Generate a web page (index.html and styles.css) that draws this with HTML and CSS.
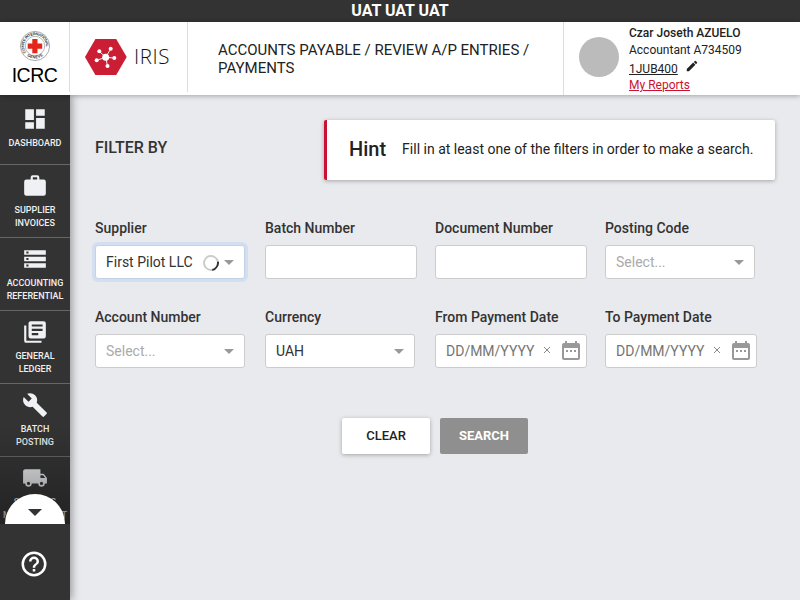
FILE: index.html
```html
<!DOCTYPE html>
<html lang="en">
<head>
<meta charset="utf-8">
<title>IRIS - Payments</title>
<link rel="stylesheet" href="styles.css">
</head>
<body>
<div class="env">UAT UAT UAT</div>
<header class="header">
  <div class="org">
    <svg class="seal" width="32" height="32" viewBox="0 0 32 32">
      <defs>
        <path id="ring" d="M7 22.4A11 11 0 1 1 25 22.4"/>
        <path id="ringlow" d="M6.2 24.2A13.6 13.6 0 0 0 25.8 24.2"/>
      </defs>
      <circle cx="16" cy="16" r="14.6" fill="#fff" stroke="#888" stroke-width=".7"/>
      <circle cx="16" cy="16" r="9.7" fill="#fff" stroke="#999" stroke-width=".7"/>
      <text class="sealtext"><textPath href="#ring" textLength="42">COMITE INTERNATIONAL</textPath></text>
      <text class="sealtext"><textPath href="#ringlow" startOffset="2.5" textLength="17">GENEVE</textPath></text>
      <path d="M13.3 9h5.2v4.6h4.7v5.1h-4.7v4.6h-5.2v-4.6H8.7v-5.1h4.6z" fill="#e3251b"/>
    </svg>
    <div class="orgname">ICRC</div>
  </div>
  <div class="app">
    <svg width="42" height="36" viewBox="0 0 42 36">
      <path d="M10.4 0h20.8L41.7 18 31.2 36H10.4L0 18z" fill="#cb1e35"/>
      <path d="M20.7 18.3 14.3 12.3M20.7 18.3 25.7 9.8M20.7 18.3 29.3 19M20.7 18.3 22.5 27M20.7 18.3 11.7 21.3" stroke="#fff" stroke-width=".9"/>
      <g fill="#fff"><circle cx="20.7" cy="18.3" r="3.5"/><circle cx="14.3" cy="12.3" r="2"/><circle cx="25.7" cy="9.8" r="2"/><circle cx="29.3" cy="19" r="2"/><circle cx="22.5" cy="27" r="2"/><circle cx="11.7" cy="21.3" r="2"/></g>
    </svg>
    <span class="appname">IRIS</span>
  </div>
  <div class="crumbs">ACCOUNTS PAYABLE / REVIEW A/P ENTRIES / PAYMENTS</div>
  <div class="user">
    <div class="avatar"></div>
    <div class="info">
      <div class="name">Czar Joseth AZUELO</div>
      <div class="role">Accountant A734509</div>
      <div class="unit"><a>1JUB400</a><svg width="14" height="14" viewBox="0 0 24 24"><path fill="#222" d="M3 17.25V21h3.75L17.81 9.94l-3.75-3.75L3 17.25zM20.71 7.04a1 1 0 0 0 0-1.41l-2.34-2.34a1 1 0 0 0-1.41 0l-1.83 1.83 3.75 3.75 1.83-1.83z"/></svg></div>
      <div class="reports"><a>My Reports</a></div>
    </div>
  </div>
</header>
<div class="main">
  <nav class="side">
    <div class="items">
      <div class="item first"><svg viewBox="0 0 24 24"><path d="M3 13h8V3H3v10zm0 8h8v-6H3v6zm10 0h8V11h-8v10zm0-18v6h8V3h-8z"/></svg>DASHBOARD</div>
      <div class="item"><svg viewBox="0 0 24 24"><path d="M10 2h4a2 2 0 0 1 2 2v2h4a2 2 0 0 1 2 2v11a2 2 0 0 1-2 2H4a2 2 0 0 1-2-2V8a2 2 0 0 1 2-2h4V4a2 2 0 0 1 2-2zm4 4V4h-4v2h4z"/></svg>SUPPLIER<br>INVOICES</div>
      <div class="item"><svg viewBox="0 0 24 24"><path d="M2 20h20v-4H2v4zm2-3h2v2H4v-2zM2 4v4h20V4H2zm4 3H4V5h2v2zm-4 7h20v-4H2v4zm2-3h2v2H4v-2z"/></svg>ACCOUNTING<br>REFERENTIAL</div>
      <div class="item"><svg viewBox="0 0 24 24"><path d="M4 6H2v14a2 2 0 0 0 2 2h14v-2H4V6zm16-4H8a2 2 0 0 0-2 2v12a2 2 0 0 0 2 2h12a2 2 0 0 0 2-2V4a2 2 0 0 0-2-2zm-1 9H9V9h10v2zm-4 4H9v-2h6v2zm4-8H9V5h10v2z"/></svg>GENERAL<br>LEDGER</div>
      <div class="item"><svg viewBox="0 0 24 24"><path d="M22.7 19l-9.1-9.1c.9-2.3.4-5-1.5-6.9-2-2-5-2.4-7.4-1.3L9 6 6 9 1.6 4.7C.4 7.1.9 10.1 2.9 12.1c1.9 1.9 4.6 2.4 6.9 1.5l9.1 9.1c.4.4 1 .4 1.4 0l2.3-2.3c.5-.4.5-1.1.1-1.4z"/></svg>BATCH<br>POSTING</div>
      <div class="item last"><svg viewBox="0 0 24 24"><path d="M20 8h-3V4H3c-1.1 0-2 .9-2 2v11h2a3 3 0 0 0 6 0h6a3 3 0 0 0 6 0h2v-5l-3-4zM6 18.5a1.5 1.5 0 1 1 0-3 1.5 1.5 0 0 1 0 3zm13.5-9l1.96 2.5H17V9.5h2.5zm-1.5 9a1.5 1.5 0 1 1 0-3 1.5 1.5 0 0 1 0 3z"/></svg>SERVICES<br>MANAGEMENT</div>
      <div class="fade"></div>
      <div class="more"><svg width="14" height="7" viewBox="0 0 14 7"><path d="M0 0h14L7 7z" fill="#333"/></svg></div>
    </div>
    <div class="help"><svg width="30" height="30" viewBox="0 0 24 24"><path fill="#fff" d="M11 18h2v-2h-2v2zm1-16a10 10 0 1 0 0 20 10 10 0 0 0 0-20zm0 18a8 8 0 1 1 0-16 8 8 0 0 1 0 16zm0-14a4 4 0 0 0-4 4h2a2 2 0 1 1 4 0c0 2-3 1.75-3 5h2c0-2.25 3-2.5 3-5a4 4 0 0 0-4-4z"/></svg></div>
  </nav>
  <main class="content">
    <div class="top">
      <h1>FILTER BY</h1>
      <div class="hint"><b>Hint</b><span>Fill in at least one of the filters in order to make a search.</span></div>
    </div>
    <div class="grid">
      <div class="field"><label>Supplier</label><div class="box sel focus"><span>First Pilot LLC</span><i class="spin"></i><i class="arrow"></i></div></div>
      <div class="field"><label>Batch Number</label><div class="box"></div></div>
      <div class="field"><label>Document Number</label><div class="box"></div></div>
      <div class="field"><label>Posting Code</label><div class="box sel"><span class="ph">Select...</span><i class="arrow"></i></div></div>
      <div class="field"><label>Account Number</label><div class="box sel"><span class="ph">Select...</span><i class="arrow"></i></div></div>
      <div class="field"><label>Currency</label><div class="box sel"><span>UAH</span><i class="arrow"></i></div></div>
      <div class="field"><label>From Payment Date</label><div class="box"><span class="date">DD/MM/YYYY</span><svg class="x" width="8" height="8" viewBox="0 0 8 8"><path d="M1 1l6 6M7 1L1 7" stroke="#888"/></svg><svg class="cal" width="18" height="20" viewBox="0 0 18 20"><path fill="#999" fill-rule="evenodd" d="M3 0h2v2h8V0h2v2h1a2 2 0 0 1 2 2v13a2 2 0 0 1-2 2H2a2 2 0 0 1-2-2V4a2 2 0 0 1 2-2h1zM2 7v10h14V7zM4 9h2v2H4zm4 0h2v2H8zm4 0h2v2h-2z"/></svg></div></div>
      <div class="field"><label>To Payment Date</label><div class="box"><span class="date">DD/MM/YYYY</span><svg class="x" width="8" height="8" viewBox="0 0 8 8"><path d="M1 1l6 6M7 1L1 7" stroke="#888"/></svg><svg class="cal" width="18" height="20" viewBox="0 0 18 20"><path fill="#999" fill-rule="evenodd" d="M3 0h2v2h8V0h2v2h1a2 2 0 0 1 2 2v13a2 2 0 0 1-2 2H2a2 2 0 0 1-2-2V4a2 2 0 0 1 2-2h1zM2 7v10h14V7zM4 9h2v2H4zm4 0h2v2H8zm4 0h2v2h-2z"/></svg></div></div>
    </div>
    <div class="actions"><button class="clear">CLEAR</button><button class="search">SEARCH</button></div>
  </main>
</div>
</body>
</html>
```
FILE: styles.css
```css
* { box-sizing: border-box; }
body {
  margin: 0; width: 800px; height: 600px; overflow: hidden;
  display: flex; flex-direction: column;
  font-family: Roboto, "Liberation Sans", sans-serif; font-size: 14px; color: #333; background: #e9eaee;
}
.env { height: 22px; flex: none; background: #333; color: #fff; text-align: center; font-weight: 700; font-size: 16px; line-height: 21px; }
.header { height: 73px; flex: none; display: flex; background: #fff; box-shadow: 0 1px 5px rgba(0,0,0,.3); position: relative; z-index: 2; }
.org { width: 70px; height: 70px; border-right: 1px solid #ddd; display: flex; flex-direction: column; align-items: center; padding-top: 8px; }
.sealtext { font: 700 3.9px "Liberation Sans", sans-serif; fill: #333; }
.orgname { font: 19.5px/20px "Liberation Sans", Arial, sans-serif; color: #000; margin-top: 3px; letter-spacing: -.5px; }
.app { width: 118px; height: 70px; border-right: 1px solid #ddd; display: flex; align-items: center; padding-left: 15px; gap: 7px; }
.appname { font: 300 20.5px/26px "Open Sans", sans-serif; color: #111; margin-top: -3px; letter-spacing: .6px; }
.crumbs { width: 375px; padding: 19px 20px 0 30px; font-size: 15px; line-height: 18px; color: #222; }
.user { flex: 1; border-left: 1px solid #ddd; display: flex; padding-left: 15px; }
.avatar { width: 40px; height: 40px; border-radius: 50%; background: #bbb; margin: 15px 10px 0 0; }
.info { font-size: 12px; color: #222; padding-top: 3px; }
.info div { height: 17px; line-height: 17px; }
.info .name { font-weight: 500; }
.unit { display: flex; gap: 7px; }
.unit a, .reports a { text-decoration: underline; }
.info .unit { height: 18px; line-height: 21px; }
.info .reports { color: #cb1131; height: 16px; line-height: 16px; }
.main { flex: 1; display: flex; min-height: 0; }
.side { width: 70px; background: #333; display: flex; flex-direction: column; box-shadow: 2px 0 8px rgba(0,0,0,.35); }
.items { height: 429px; overflow: hidden; position: relative; }
.item { height: 73px; border-bottom: 1px solid #666; padding-top: 8px; color: #f0f0f0; text-align: center; font-size: 9px; line-height: 13px; font-weight: 500; }
.item.first { height: 70px; padding-top: 11px; }
.item svg { display: block; width: 26px; height: 26px; margin: 0 auto 5px; fill: #f0f1f4; }
.item.last { letter-spacing: .2px; }
.fade { position: absolute; left: 0; right: 0; bottom: 0; height: 100px; background: linear-gradient(rgba(20,20,20,0), rgba(20,20,20,.5)); }
.more { position: absolute; left: 5px; bottom: 0; width: 60px; height: 30px; border-radius: 30px 30px 0 0; background: #fff; display: flex; justify-content: center; padding-top: 15px; }
.help { height: 76px; padding: 25px 0 0 19px; }
.content { flex: 1; padding: 25px; }
.top { display: flex; justify-content: space-between; }
h1 { margin: 18px 0 0; font-size: 16px; line-height: 19px; font-weight: 500; }
.hint { width: 451px; height: 60px; background: #fff; border-left: 3px solid #cb1131; border-radius: 2px; box-shadow: 0 1px 4px rgba(0,0,0,.3); display: flex; align-items: center; padding: 0 0 2px 22px; gap: 16px; color: #222; }
.hint span { white-space: nowrap; }
.hint b { font-size: 20px; font-weight: 500; }
.grid { display: grid; grid-template-columns: repeat(4, 152px); column-gap: 18px; row-gap: 29px; margin-top: 39px; }
.field label { display: block; height: 26px; line-height: 18px; font-weight: 500; }
.box { width: 152px; height: 34px; background: #fff; border: 1px solid #ccc; border-radius: 3px; display: flex; align-items: center; padding: 0 6px 0 10px; }
.sel { width: 150px; padding-right: 10px; }
.focus { border-color: #c4d2e8; box-shadow: 0 0 0 3px #d3dff0; }
.ph { color: #aaa; }
.date { color: #757575; }
.arrow { margin-left: auto; border: 5px solid transparent; border-top-color: #999; border-bottom: 0; }
.spin { width: 16px; height: 16px; border-radius: 50%; border: 2px solid #ccc; border-right-color: #333; transform: rotate(35deg); margin: 2px 0 0 10px; }
.x { margin: -2px 0 0 9px; }
.cal { margin-left: auto; margin-top: -1px; }
.actions { display: flex; gap: 10px; margin: 50px 0 0 247px; }
.actions button { width: 88px; height: 36px; padding: 0 0 1px; border: 0; border-radius: 2px; font: 500 13px Roboto, sans-serif; }
.clear { background: #fff; color: #222; box-shadow: 0 1px 4px rgba(0,0,0,.3); }
.search { background: #8f8f8f; color: #fff; }
.actions .search { font-weight: 700; }
```
